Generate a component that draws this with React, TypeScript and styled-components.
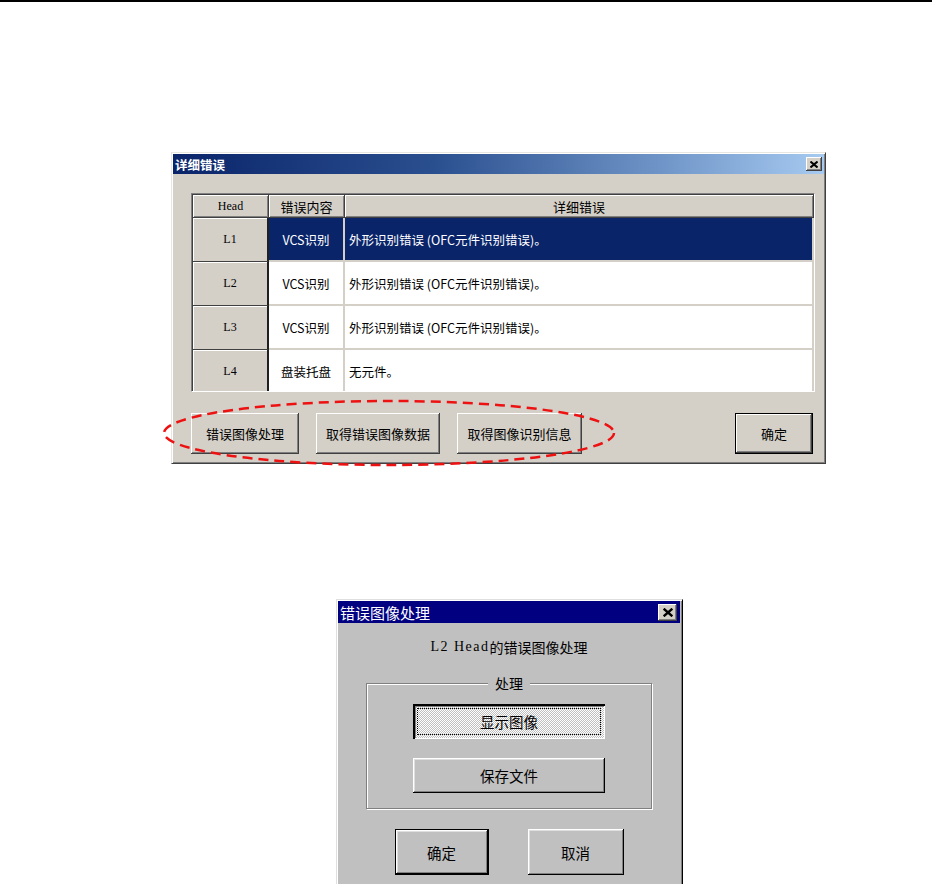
import React from "react";
import styled, { createGlobalStyle, css } from "styled-components";

const Global = createGlobalStyle`
  html, body { margin: 0; padding: 0; background: #fff; overflow: hidden; }
  body { font-family: "Noto Sans CJK SC", "Noto Sans", sans-serif; }
`;

const CJK = `"Noto Sans CJK SC", "Noto Sans", sans-serif`;
const SERIF = `"Liberation Serif", "Noto Sans CJK SC", serif`;

const Page = styled.div`
  width: 941px;
  height: 884px;
  overflow: hidden;
  position: relative;
`;

const TopRule = styled.div`
  width: 932px;
  height: 2px;
  background: #000;
`;

/* ---------- Dialog 1 ---------- */
const Dialog1 = styled.div`
  position: relative;
  box-sizing: border-box;
  width: 655px;
  height: 312px;
  margin: 150px 0 0 171px;
  background: #d4d0c8;
  border: 1px solid;
  border-color: #e8e6e1 #404040 #404040 #e8e6e1;
  box-shadow: inset 1px 1px 0 #fff, inset -1px -1px 0 #808080;
  padding: 1px 1px 0 1px;
`;

const GradTitle = styled.div`
  height: 20px;
  display: flex;
  align-items: center;
  justify-content: space-between;
  padding: 0 2px 0 2px;
  background: linear-gradient(90deg, #0a246a 0%, #2a4f8f 40%, #6f95c8 75%, #a6caf0 100%);
  color: #fff;
  font: bold 12.5px ${CJK};
`;

const CloseBtn = styled.div<{ $w: number; $h: number }>`
  box-sizing: border-box;
  width: ${(p) => p.$w}px;
  height: ${(p) => p.$h}px;
  background: #d4d0c8;
  display: flex;
  align-items: center;
  justify-content: center;
  box-shadow: inset -1px -1px 0 #404040, inset 1px 1px 0 #fff,
    inset -2px -2px 0 #808080;
`;

const Body1 = styled.div`
  padding: 19px 11px 0 18px;
`;

const Table = styled.div`
  box-sizing: border-box;
  width: 624px;
  height: 199px;
  display: grid;
  grid-template-columns: 76px 76px 1fr;
  grid-template-rows: 23px repeat(4, 44px);
  align-content: start;
  border: 1px solid;
  border-color: #808080 #fff #fff #808080;
  box-shadow: inset 1px 1px 0 #404040;
  padding: 1px 0 0 1px;
  background: #fff;
  overflow: hidden;
`;

const HeadCell = styled.div<{ $serif?: boolean }>`
  display: flex;
  align-items: center;
  justify-content: center;
  background: #d4d0c8;
  border-right: 1px solid #404040;
  border-bottom: 1px solid #404040;
  box-shadow: inset 1px 1px 0 #fff, inset -1px -1px 0 #808080;
  font: ${(p) => (p.$serif ? `12px ${SERIF}` : `13px ${CJK}`)};
  color: #000;
`;

const RowHead = styled.div`
  display: flex;
  align-items: center;
  justify-content: center;
  background: #d4d0c8;
  border-right: 2px solid #202020;
  border-bottom: 1px solid #404040;
  box-shadow: inset 1px 1px 0 #fff;
  font: 12px ${SERIF};
  color: #000;
`;

const DataCell = styled.div<{ $sel?: boolean; $center?: boolean }>`
  display: flex;
  align-items: center;
  justify-content: ${(p) => (p.$center ? "center" : "flex-start")};
  padding-left: ${(p) => (p.$center ? 0 : 4)}px;
  background: ${(p) => (p.$sel ? "#0a246a" : "#fff")};
  color: ${(p) => (p.$sel ? "#fff" : "#000")};
  border-right: 2px solid #d4d0c8;
  border-bottom: 2px solid #d4d0c8;
  font: 12.5px ${CJK};
  white-space: pre;
`;

const ButtonRow1 = styled.div`
  display: flex;
  gap: 17px;
  margin-top: 21px;
`;

const bevel = css`
  box-shadow: inset -1px -1px 0 #404040, inset 1px 1px 0 #fff,
    inset -2px -2px 0 #808080;
`;

const WinButton = styled.div<{ $w: number; $def?: boolean; $push?: boolean }>`
  box-sizing: border-box;
  width: ${(p) => p.$w}px;
  height: 41px;
  margin-left: ${(p) => (p.$push ? "auto" : "0")};
  background: #d4d0c8;
  display: flex;
  align-items: center;
  justify-content: center;
  font: 13px ${CJK};
  color: #000;
  ${bevel}
  ${(p) =>
    p.$def &&
    css`
      border: 1px solid #000;
    `}
`;

const Ellipse = styled.svg`
  position: absolute;
  left: -10px;
  top: 244px;
  overflow: visible;
  pointer-events: none;
`;

/* ---------- Dialog 2 ---------- */
const Dialog2 = styled.div`
  box-sizing: border-box;
  width: 347px;
  height: 320px;
  margin: 135px 0 0 336px;
  background: #c0c0c0;
  border: 1px solid;
  border-color: #dfdfdf #000 #000 #dfdfdf;
  box-shadow: inset 1px 1px 0 #fff, inset -1px -1px 0 #808080;
  padding: 1px 2px 0 1px;
`;

const NavyTitle = styled.div`
  height: 22px;
  display: flex;
  align-items: center;
  justify-content: space-between;
  padding: 0 3px 0 2px;
  background: #000080;
  color: #fff;
  font: 15px ${CJK};
`;

const Body2 = styled.div`
  display: flex;
  flex-direction: column;
  align-items: center;
  padding-top: 14px;
`;

const Caption = styled.div`
  height: 20px;
  display: flex;
  align-items: center;
  font: 14px ${CJK};
  color: #000;
`;

const SerifText = styled.span`
  font: 14px ${SERIF};
  letter-spacing: 1.5px;
  white-space: pre;
`;

const GroupBox = styled.div`
  position: relative;
  box-sizing: border-box;
  width: 286px;
  margin-top: 26px;
  padding: 20px 0 15px;
  border: 1px solid #808080;
  box-shadow: inset 1px 1px 0 #fff, 1px 1px 0 #fff;
  display: flex;
  flex-direction: column;
  align-items: center;
  gap: 19px;
`;

const Legend = styled.div`
  position: absolute;
  top: -10px;
  left: 50%;
  transform: translateX(-50%);
  padding: 0 7px;
  background: #c0c0c0;
  font: 14px ${CJK};
  line-height: 18px;
  color: #000;
`;

const Btn2 = styled.div<{ $w: number; $h: number; $pressed?: boolean; $def?: boolean }>`
  position: relative;
  box-sizing: border-box;
  width: ${(p) => p.$w}px;
  height: ${(p) => p.$h}px;
  display: flex;
  align-items: center;
  justify-content: center;
  font: 14.5px ${CJK};
  color: #000;
  background: #c0c0c0;
  box-shadow: inset -1px -1px 0 #000, inset 1px 1px 0 #fff,
    inset -2px -2px 0 #808080, inset 2px 2px 0 #dfdfdf;
  ${(p) =>
    p.$pressed &&
    css`
      background: repeating-conic-gradient(#fff 0 25%, #c0c0c0 0 50%) 0 0 / 2px 2px;
      box-shadow: inset 2px 2px 0 #000, inset -1px -1px 0 #fff,
        inset 3px 3px 0 #808080;
      outline: 1px dotted #000;
      outline-offset: -5px;
    `}
  ${(p) =>
    p.$def &&
    css`
      border: 1px solid #000;
    `}
`;

const Btn2Row = styled.div`
  display: flex;
  gap: 39px;
  margin-top: 20px;
`;

const XIcon = ({ size = 8, w = 2 }: { size?: number; w?: number }) => (
  <svg width={size} height={size - 1} viewBox="0 0 8 7">
    <path d="M0.5 0.5 L7.5 6.5 M7.5 0.5 L0.5 6.5" stroke="#000" strokeWidth={w} />
  </svg>
);

const rows = [
  { h: "L1", c: "VCS识别", d: "外形识别错误 (OFC元件识别错误)。", sel: true },
  { h: "L2", c: "VCS识别", d: "外形识别错误 (OFC元件识别错误)。" },
  { h: "L3", c: "VCS识别", d: "外形识别错误 (OFC元件识别错误)。" },
  { h: "L4", c: "盘装托盘", d: "无元件。" },
];

export default function App() {
  return (
    <Page>
      <Global />
      <TopRule />
      <Dialog1>
        <GradTitle>
          <span>详细错误</span>
          <CloseBtn $w={16} $h={14}>
            <XIcon />
          </CloseBtn>
        </GradTitle>
        <Body1>
          <Table>
            <HeadCell $serif>Head</HeadCell>
            <HeadCell>错误内容</HeadCell>
            <HeadCell>详细错误</HeadCell>
            {rows.map((r) => (
              <React.Fragment key={r.h}>
                <RowHead>{r.h}</RowHead>
                <DataCell $sel={r.sel} $center>
                  {r.c}
                </DataCell>
                <DataCell $sel={r.sel}>{r.d}</DataCell>
              </React.Fragment>
            ))}
          </Table>
          <ButtonRow1>
            <WinButton $w={108}>错误图像处理</WinButton>
            <WinButton $w={124}>取得错误图像数据</WinButton>
            <WinButton $w={125}>取得图像识别信息</WinButton>
            <WinButton $w={78} $def $push>
              确定
            </WinButton>
          </ButtonRow1>
        </Body1>
        <Ellipse width="460" height="70" viewBox="0 0 460 70">
          <ellipse
            cx="227"
            cy="36"
            rx="225"
            ry="32"
            fill="none"
            stroke="#ee1111"
            strokeWidth="2.5"
            strokeDasharray="10 6"
          />
        </Ellipse>
      </Dialog1>

      <Dialog2>
        <NavyTitle>
          <span>错误图像处理</span>
          <CloseBtn $w={19} $h={17}>
            <XIcon size={10} w={2} />
          </CloseBtn>
        </NavyTitle>
        <Body2>
          <Caption>
            <SerifText>L2 Head</SerifText>的错误图像处理
          </Caption>
          <GroupBox>
            <Legend>处理</Legend>
            <Btn2 $w={192} $h={35} $pressed>
              显示图像
            </Btn2>
            <Btn2 $w={192} $h={35}>
              保存文件
            </Btn2>
          </GroupBox>
          <Btn2Row>
            <Btn2 $w={94} $h={46} $def>
              确定
            </Btn2>
            <Btn2 $w={96} $h={46}>
              取消
            </Btn2>
          </Btn2Row>
        </Body2>
      </Dialog2>
    </Page>
  );
}
